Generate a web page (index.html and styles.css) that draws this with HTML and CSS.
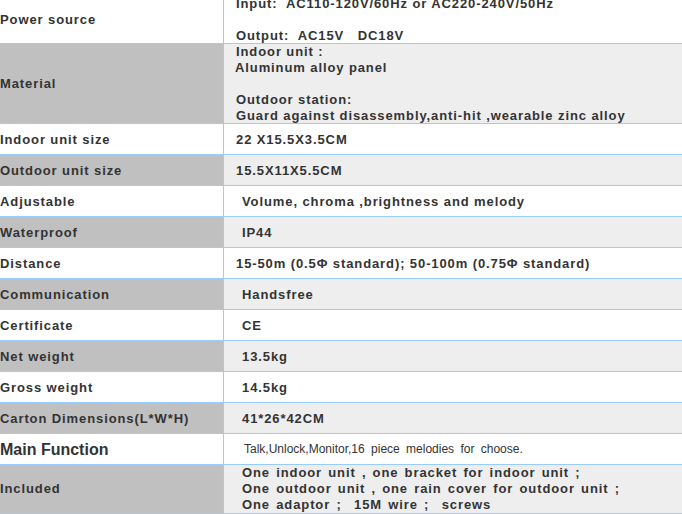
FILE: index.html
```html
<!DOCTYPE html>
<html>
<head>
<meta charset="utf-8">
<title>Specifications</title>
<link rel="stylesheet" href="styles.css">
</head>
<body>
<table class="spec">
  <tr class="multi">
    <td class="label">Power source</td>
    <td class="value">Input:&nbsp; AC110-120V/60Hz or AC220-240V/50Hz<br><br>Output:&nbsp; AC15V&nbsp;&nbsp; DC18V</td>
  </tr>
  <tr class="alt multi">
    <td class="label">Material</td>
    <td class="value">Indoor unit :<br><span class="tight">Aluminum alloy panel</span><br><br>Outdoor station:<br>Guard against disassembly,anti-hit ,wearable zinc alloy</td>
  </tr>
  <tr>
    <td class="label">Indoor unit size</td>
    <td class="value">22 X15.5X3.5CM</td>
  </tr>
  <tr class="alt">
    <td class="label">Outdoor unit size</td>
    <td class="value">15.5X11X5.5CM</td>
  </tr>
  <tr>
    <td class="label">Adjustable</td>
    <td class="value ind">Volume, chroma ,brightness and melody</td>
  </tr>
  <tr class="alt">
    <td class="label">Waterproof</td>
    <td class="value ind">IP44</td>
  </tr>
  <tr>
    <td class="label">Distance</td>
    <td class="value">15-50m (0.5Φ standard); 50-100m (0.75Φ standard)</td>
  </tr>
  <tr class="alt">
    <td class="label">Communication</td>
    <td class="value ind">Handsfree</td>
  </tr>
  <tr>
    <td class="label">Certificate</td>
    <td class="value ind">CE</td>
  </tr>
  <tr class="alt">
    <td class="label">Net weight</td>
    <td class="value ind">13.5kg</td>
  </tr>
  <tr>
    <td class="label">Gross weight</td>
    <td class="value ind">14.5kg</td>
  </tr>
  <tr class="alt">
    <td class="label">Carton Dimensions(L*W*H)</td>
    <td class="value ind">41*26*42CM</td>
  </tr>
  <tr>
    <td class="label big">Main Function</td>
    <td class="value note">Talk,Unlock,Monitor,16 piece melodies for choose.</td>
  </tr>
  <tr class="alt multi">
    <td class="label">Included</td>
    <td class="value ind wide">One indoor unit , one bracket for indoor unit ;<br>One outdoor unit , one rain cover for outdoor unit ;<br>One adaptor ;&nbsp; 15M wire ;&nbsp; screws</td>
  </tr>
</table>
</body>
</html>
```
FILE: styles.css
```css
html, body {
  margin: 0;
  padding: 0;
  overflow: hidden;
  background: #fff;
}

.spec {
  border-collapse: separate;
  border-spacing: 0;
  width: 700px;
  margin-top: -4px;
  font-family: "Liberation Sans", Arial, sans-serif;
  font-weight: bold;
  font-size: 13px;
  line-height: 15.8px;
  letter-spacing: 0.9px;
  color: #333;
}

.spec td {
  padding: 2px 0 0 0;
  border-bottom: 1px solid #99ccff;
  vertical-align: middle;
  text-align: left;
  height: 28px;
}

.spec .label {
  width: 223px;
}

.spec .value {
  border-left: 1px solid #99ccff;
  padding-left: 12px;
}

.spec .value.ind {
  padding-left: 18px;
}

.spec .alt .label {
  background: #c0c0c0;
}

.spec .alt .value {
  background: #eeeeee;
}

.spec .multi td {
  height: auto;
  padding-top: 0;
}

.tight {
  margin-left: -1px;
}

.spec .wide {
  word-spacing: 1.7px;
}

.spec .big {
  font-size: 16px;
  letter-spacing: 0;
}

.spec .note {
  font-weight: normal;
  font-size: 12px;
  letter-spacing: 0;
  word-spacing: 3px;
  padding-left: 20px;
}
```
